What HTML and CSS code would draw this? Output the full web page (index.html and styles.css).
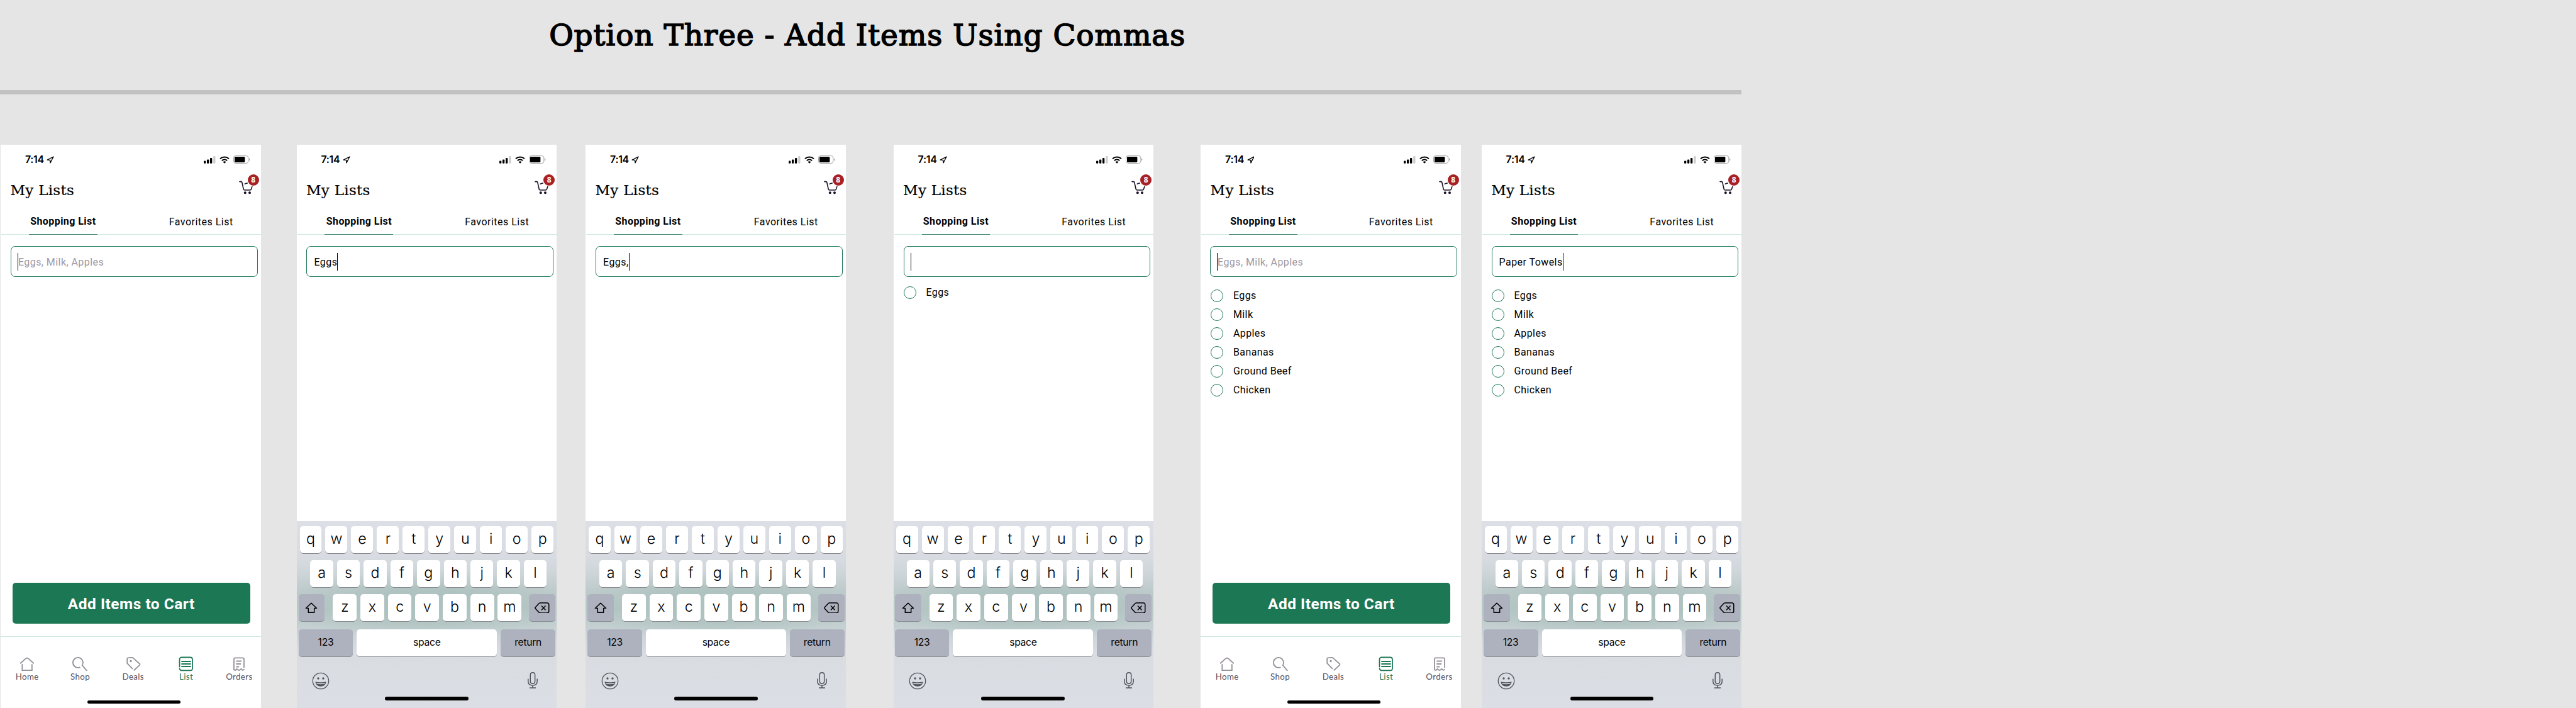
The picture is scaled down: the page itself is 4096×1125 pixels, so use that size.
FILE: index.html
```
<!DOCTYPE html>
<html lang="en">
<head>
<meta charset="utf-8">
<title>Option Three</title>
<link rel="stylesheet" href="styles.css">
</head>
<body>
<svg class="sprite" aria-hidden="true">
  <symbol id="i-loc" viewBox="0 0 12 12"><path d="M11 1 1.2 6.1l4.5.2.2 4.6z" fill="none" stroke="#000" stroke-width="1.3" stroke-linejoin="round"/></symbol>
  <symbol id="i-signal" viewBox="0 0 19 12"><rect x="0" y="7.6" width="3.3" height="4.2" rx="1"/><rect x="5" y="5.6" width="3.3" height="6.2" rx="1"/><rect x="10" y="3" width="3.3" height="8.8" rx="1"/><rect x="15.2" y="0" width="3.3" height="11.8" rx="1" fill="#ccc"/></symbol>
  <symbol id="i-wifi" viewBox="0 0 16 12"><path d="M1 4.3a10.2 10.2 0 0 1 14 0M3.8 7.2a6.2 6.2 0 0 1 8.4 0" fill="none" stroke="#000" stroke-width="2.1"/><path d="M8 11.8 5.5 9.3a3.7 3.7 0 0 1 5 0z"/></symbol>
  <symbol id="i-batt" viewBox="0 0 27 13"><rect x=".5" y=".5" width="23.4" height="12" rx="3.4" fill="none" stroke="#a5a5a5"/><rect x="2" y="2" width="16.4" height="9" rx="1.4"/><path d="M25 4.500v4c.9-.3 1.400-1.100 1.400-2s-.5-1.700-1.400-2z" fill="#a5a5a5"/></symbol>
  <symbol id="i-cart" viewBox="0 0 23 22"><g fill="none" stroke="#1d1127" stroke-width="1.6" stroke-linecap="round" stroke-linejoin="round"><path d="M1 1.600h2.500q1 0 1.300 1.200l2.400 10.700q.4 1.500 1.800 1.500h8.800q1.200 0 1.600-1.200l1.500-4.300M9.300 5.300q1.500-.8 4-1.300"/></g><circle cx="9.800" cy="19.300" r="2" fill="#1d1127"/><circle cx="17" cy="19.300" r="2" fill="#1d1127"/></symbol>
  <symbol id="i-home" viewBox="0 0 24 24"><path d="M1.800 10.800 9.700 3.600q2.300-2 4.600 0l7.900 7.200M4.300 13v9.200h15.600V13"/></symbol>
  <symbol id="i-shop" viewBox="0 0 24 24"><path d="M11.800 17.400A8 8 0 1 1 15.700 14.200L22.800 22.400"/></symbol>
  <symbol id="i-deals" viewBox="0 0 24 24"><path d="M10.400 19.300 2.200 10.800V4.200q.2-2 2.200-2l6.400-.4 11 9.700q1.200 1.300 0 2.600L13.400 21.800"/><circle cx="8" cy="7.500" r=".8"/></symbol>
  <symbol id="i-list" viewBox="0 0 24 24"><path d="M1.500 16.500V5Q1.500 1.500 5 1.500h13.500Q22 1.500 22 5v14q0 3.500-3.500 3.500H5.500q-3.300 0-4-3M5 8h14M5 12h14M5 16h14"/></symbol>
  <symbol id="i-orders" viewBox="0 0 24 24"><path d="M4 21.500V4.500q0-2.200 2.200-2.200h11.600q2.200 0 2.200 2.200v13M4 21.500l2.300.5 2.200-2 3.500 2.300 3.500-2.300 2.500 2 2-1M8 7.500h7.500M8 12h6.500M8 16.500h3.500"/></symbol>
  <symbol id="i-shift" viewBox="0 0 20 18"><path d="M10 1.200 1.400 9.600h3.900v6.700h9.400V9.600h3.900z" fill="none" stroke="#000" stroke-width="1.500" stroke-linejoin="round"/></symbol>
  <symbol id="i-del" viewBox="0 0 24 18"><path d="M8.800 1H20q2.800 0 2.800 2.800v10.400q0 2.800-2.800 2.800H8.800q-1 0-1.700-.7L1.300 9.900q-.8-.9 0-1.800L7.100 1.700Q7.800 1 8.800 1zM11 5.500l6.500 7M17.500 5.500l-6.500 7" fill="none" stroke="#000" stroke-width="1.500"/></symbol>
  <symbol id="i-emoji" viewBox="0 0 28 28"><circle cx="14" cy="14" r="12.700" fill="none" stroke="#50555c" stroke-width="1.300"/><circle cx="10" cy="10" r="1.700" fill="#50555c"/><circle cx="18" cy="10" r="1.700" fill="#50555c"/><path d="M5.300 15.200q8.700 2 17.400 0-1.300 7.500-8.700 7.500t-8.700-7.500z" fill="#50555c"/><path d="M6.800 16.900q7.200 1.600 14.400 0l-.8 1.500q-6.400 1.500-12.800 0z" fill="#dbdee4"/></symbol>
  <symbol id="i-mic" viewBox="0 0 16 26"><path d="M8 .8q3.700 0 3.700 3.700v10q0 3.700-3.700 3.700t-3.700-3.700v-10Q4.300.8 8 .8zM.8 10.500v4Q.8 21 8 21t7.200-6.500v-4M8 21v4M3 25.100h10" fill="none" stroke="#50555c" stroke-width="1.500"/></symbol>
</svg>

<main class="board">
  <header class="board-head"><h1>Option Three - Add Items Using Commas</h1></header>
  <div class="phones">

    <section class="phone">
      <div class="status"><span class="time">7:14</span><svg class="loc"><use href="#i-loc"/></svg><svg class="signal"><use href="#i-signal"/></svg><svg class="wifi"><use href="#i-wifi"/></svg><svg class="batt"><use href="#i-batt"/></svg></div>
      <div class="head"><h2>My Lists</h2><div class="cart"><svg><use href="#i-cart"/></svg><b>8</b></div></div>
      <nav class="tabs"><span class="active">Shopping List</span><span class="other">Favorites List</span></nav>
      <div class="field placeholder"><i class="caret"></i><span>Eggs, Milk, Apples</span></div>
      <div class="bottom">
        <button class="add">Add Items to Cart</button>
        <nav class="tabbar"><a><svg><use href="#i-home"/></svg>Home</a><a><svg><use href="#i-shop"/></svg>Shop</a><a><svg><use href="#i-deals"/></svg>Deals</a><a class="on"><svg><use href="#i-list"/></svg>List</a><a><svg><use href="#i-orders"/></svg>Orders</a></nav>
        <i class="home-bar"></i>
      </div>
    </section>

    <section class="phone">
      <div class="status"><span class="time">7:14</span><svg class="loc"><use href="#i-loc"/></svg><svg class="signal"><use href="#i-signal"/></svg><svg class="wifi"><use href="#i-wifi"/></svg><svg class="batt"><use href="#i-batt"/></svg></div>
      <div class="head"><h2>My Lists</h2><div class="cart"><svg><use href="#i-cart"/></svg><b>8</b></div></div>
      <nav class="tabs"><span class="active">Shopping List</span><span class="other">Favorites List</span></nav>
      <div class="field"><span>Eggs</span><i class="caret"></i></div>
      <div class="keyboard">
        <div class="row r1"><kbd>q</kbd><kbd>w</kbd><kbd>e</kbd><kbd>r</kbd><kbd>t</kbd><kbd>y</kbd><kbd>u</kbd><kbd>i</kbd><kbd>o</kbd><kbd>p</kbd></div>
        <div class="row r2"><kbd>a</kbd><kbd>s</kbd><kbd>d</kbd><kbd>f</kbd><kbd>g</kbd><kbd>h</kbd><kbd>j</kbd><kbd>k</kbd><kbd>l</kbd></div>
        <div class="row r3"><kbd class="fn"><svg class="shift"><use href="#i-shift"/></svg></kbd><div class="letters"><kbd>z</kbd><kbd>x</kbd><kbd>c</kbd><kbd>v</kbd><kbd>b</kbd><kbd>n</kbd><kbd>m</kbd></div><kbd class="fn"><svg class="del"><use href="#i-del"/></svg></kbd></div>
        <div class="row r4"><kbd class="fn">123</kbd><kbd class="space">space</kbd><kbd class="fn">return</kbd></div>
        <div class="extras"><svg class="emoji"><use href="#i-emoji"/></svg><svg class="mic"><use href="#i-mic"/></svg></div>
        <i class="home-bar"></i>
      </div>
    </section>

    <section class="phone">
      <div class="status"><span class="time">7:14</span><svg class="loc"><use href="#i-loc"/></svg><svg class="signal"><use href="#i-signal"/></svg><svg class="wifi"><use href="#i-wifi"/></svg><svg class="batt"><use href="#i-batt"/></svg></div>
      <div class="head"><h2>My Lists</h2><div class="cart"><svg><use href="#i-cart"/></svg><b>8</b></div></div>
      <nav class="tabs"><span class="active">Shopping List</span><span class="other">Favorites List</span></nav>
      <div class="field"><span>Eggs,</span><i class="caret"></i></div>
      <div class="keyboard">
        <div class="row r1"><kbd>q</kbd><kbd>w</kbd><kbd>e</kbd><kbd>r</kbd><kbd>t</kbd><kbd>y</kbd><kbd>u</kbd><kbd>i</kbd><kbd>o</kbd><kbd>p</kbd></div>
        <div class="row r2"><kbd>a</kbd><kbd>s</kbd><kbd>d</kbd><kbd>f</kbd><kbd>g</kbd><kbd>h</kbd><kbd>j</kbd><kbd>k</kbd><kbd>l</kbd></div>
        <div class="row r3"><kbd class="fn"><svg class="shift"><use href="#i-shift"/></svg></kbd><div class="letters"><kbd>z</kbd><kbd>x</kbd><kbd>c</kbd><kbd>v</kbd><kbd>b</kbd><kbd>n</kbd><kbd>m</kbd></div><kbd class="fn"><svg class="del"><use href="#i-del"/></svg></kbd></div>
        <div class="row r4"><kbd class="fn">123</kbd><kbd class="space">space</kbd><kbd class="fn">return</kbd></div>
        <div class="extras"><svg class="emoji"><use href="#i-emoji"/></svg><svg class="mic"><use href="#i-mic"/></svg></div>
        <i class="home-bar"></i>
      </div>
    </section>

    <section class="phone">
      <div class="status"><span class="time">7:14</span><svg class="loc"><use href="#i-loc"/></svg><svg class="signal"><use href="#i-signal"/></svg><svg class="wifi"><use href="#i-wifi"/></svg><svg class="batt"><use href="#i-batt"/></svg></div>
      <div class="head"><h2>My Lists</h2><div class="cart"><svg><use href="#i-cart"/></svg><b>8</b></div></div>
      <nav class="tabs"><span class="active">Shopping List</span><span class="other">Favorites List</span></nav>
      <div class="field placeholder"><i class="caret"></i></div>
      <ul class="items near"><li>Eggs</li></ul>
      <div class="keyboard left">
        <div class="row r1"><kbd>q</kbd><kbd>w</kbd><kbd>e</kbd><kbd>r</kbd><kbd>t</kbd><kbd>y</kbd><kbd>u</kbd><kbd>i</kbd><kbd>o</kbd><kbd>p</kbd></div>
        <div class="row r2"><kbd>a</kbd><kbd>s</kbd><kbd>d</kbd><kbd>f</kbd><kbd>g</kbd><kbd>h</kbd><kbd>j</kbd><kbd>k</kbd><kbd>l</kbd></div>
        <div class="row r3"><kbd class="fn"><svg class="shift"><use href="#i-shift"/></svg></kbd><div class="letters"><kbd>z</kbd><kbd>x</kbd><kbd>c</kbd><kbd>v</kbd><kbd>b</kbd><kbd>n</kbd><kbd>m</kbd></div><kbd class="fn"><svg class="del"><use href="#i-del"/></svg></kbd></div>
        <div class="row r4"><kbd class="fn">123</kbd><kbd class="space">space</kbd><kbd class="fn">return</kbd></div>
        <div class="extras"><svg class="emoji"><use href="#i-emoji"/></svg><svg class="mic"><use href="#i-mic"/></svg></div>
        <i class="home-bar"></i>
      </div>
    </section>

    <section class="phone">
      <div class="status"><span class="time">7:14</span><svg class="loc"><use href="#i-loc"/></svg><svg class="signal"><use href="#i-signal"/></svg><svg class="wifi"><use href="#i-wifi"/></svg><svg class="batt"><use href="#i-batt"/></svg></div>
      <div class="head"><h2>My Lists</h2><div class="cart"><svg><use href="#i-cart"/></svg><b>8</b></div></div>
      <nav class="tabs"><span class="active">Shopping List</span><span class="other">Favorites List</span></nav>
      <div class="field placeholder shifted"><i class="caret"></i><span>Eggs, Milk, Apples</span></div>
      <ul class="items"><li>Eggs</li><li>Milk</li><li>Apples</li><li>Bananas</li><li>Ground Beef</li><li>Chicken</li></ul>
      <div class="bottom">
        <button class="add">Add Items to Cart</button>
        <nav class="tabbar"><a><svg><use href="#i-home"/></svg>Home</a><a><svg><use href="#i-shop"/></svg>Shop</a><a><svg><use href="#i-deals"/></svg>Deals</a><a class="on"><svg><use href="#i-list"/></svg>List</a><a><svg><use href="#i-orders"/></svg>Orders</a></nav>
        <i class="home-bar"></i>
      </div>
    </section>

    <section class="phone">
      <div class="status"><span class="time">7:14</span><svg class="loc"><use href="#i-loc"/></svg><svg class="signal"><use href="#i-signal"/></svg><svg class="wifi"><use href="#i-wifi"/></svg><svg class="batt"><use href="#i-batt"/></svg></div>
      <div class="head"><h2>My Lists</h2><div class="cart"><svg><use href="#i-cart"/></svg><b>8</b></div></div>
      <nav class="tabs"><span class="active">Shopping List</span><span class="other">Favorites List</span></nav>
      <div class="field"><span>Paper Towels</span><i class="caret"></i></div>
      <ul class="items"><li>Eggs</li><li>Milk</li><li>Apples</li><li>Bananas</li><li>Ground Beef</li><li>Chicken</li></ul>
      <div class="keyboard">
        <div class="row r1"><kbd>q</kbd><kbd>w</kbd><kbd>e</kbd><kbd>r</kbd><kbd>t</kbd><kbd>y</kbd><kbd>u</kbd><kbd>i</kbd><kbd>o</kbd><kbd>p</kbd></div>
        <div class="row r2"><kbd>a</kbd><kbd>s</kbd><kbd>d</kbd><kbd>f</kbd><kbd>g</kbd><kbd>h</kbd><kbd>j</kbd><kbd>k</kbd><kbd>l</kbd></div>
        <div class="row r3"><kbd class="fn"><svg class="shift"><use href="#i-shift"/></svg></kbd><div class="letters"><kbd>z</kbd><kbd>x</kbd><kbd>c</kbd><kbd>v</kbd><kbd>b</kbd><kbd>n</kbd><kbd>m</kbd></div><kbd class="fn"><svg class="del"><use href="#i-del"/></svg></kbd></div>
        <div class="row r4"><kbd class="fn">123</kbd><kbd class="space">space</kbd><kbd class="fn">return</kbd></div>
        <div class="extras"><svg class="emoji"><use href="#i-emoji"/></svg><svg class="mic"><use href="#i-mic"/></svg></div>
        <i class="home-bar"></i>
      </div>
    </section>

  </div>
</main>
</body>
</html>
```
FILE: styles.css
```
* { box-sizing: border-box; margin: 0; padding: 0; }
html, body { background: #e5e5e5; overflow: hidden; }
.sprite { display: none; }
.board { width: 4100px; height: 1126px; zoom: 0.99902; font-family: Roboto, sans-serif; color: #000; }
.board-head { width: 2772px; height: 150px; border-bottom: 8px solid #c2c2c2; padding: 24px 0 0 874px; }
.board-head h1 { font: 400 47px/64px "DejaVu Serif", serif; letter-spacing: 0.93px; -webkit-text-stroke: 1.6px #000; white-space: nowrap; }

.phones { display: grid; grid-template-columns: 471px 460px 490px 489px 447px 414px; padding: 80px 0 0 1px; }
.phone { width: 414px; height: 896px; background: #fff; display: flex; flex-direction: column; overflow: hidden; }
.phone svg { display: block; flex: none; }

.status { height: 48px; display: flex; align-items: center; padding: 0 17px 0 39px; }
.time { font: 600 16px/20px Inter, sans-serif; width: 34.5px; letter-spacing: -0.3px; white-space: nowrap; }
.loc { width: 12px; height: 12px; }
.signal { width: 19px; height: 12px; margin-left: auto; }
.wifi { width: 16px; height: 12px; margin-left: 6px; }
.batt { width: 27px; height: 13px; margin-left: 6px; }

.head { height: 61px; display: flex; justify-content: space-between; padding: 6px 3px 0 15.5px; }
.head h2 { font: 400 23px/38px "DejaVu Serif", serif; letter-spacing: 0.3px; -webkit-text-stroke: 0.2px #000; white-space: nowrap; }
.cart { width: 32px; height: 32px; position: relative; padding-top: 3px; }
.cart svg { width: 23px; height: 22px; }
.cart b { position: absolute; right: 0; top: -7px; width: 18px; height: 18px; border-radius: 50%; background: #a92024; color: #fff; font: 700 12px/18px "Open Sans", sans-serif; text-align: center; }

.tabs { height: 34px; margin-left: 1px; border-bottom: 2px solid #d0e7df; display: flex; flex: none; }
.tabs span { font-size: 16px; line-height: 27px; white-space: nowrap; }
.tabs .active { height: 34px; width: 109px; margin-left: 44px; font-weight: 700; text-align: center; border-bottom: 2px solid #3c876a; letter-spacing: 0.45px; }
.tabs .other { margin-left: 114px; padding-top: 1px; letter-spacing: 0.5px; }

.field { flex: none; width: 393px; height: 50px; margin: 18px 0 0 16px; border: 1px solid #1c7755; border-radius: 7px; display: flex; align-items: center; padding-left: 11px; font-size: 16px; letter-spacing: 0.45px; }
.field span { white-space: nowrap; padding-top: 1px; }
.caret { width: 1px; height: 28px; background: #000; }
.placeholder { color: #9d98a3; padding-left: 10px; }
.shifted { margin-left: 15px; }

.items { list-style: none; margin: 15px 0 0 16px; }
.items.near { margin-top: 10px; }
.items li { height: 30px; display: flex; align-items: center; font-size: 16px; letter-spacing: 0.4px; line-height: 30px; white-space: nowrap; gap: 16px; }
.items li::before { content: ""; width: 18px; height: 18px; border: 1px solid #1c7755; border-radius: 50%; }

.bottom { margin-top: auto; height: 199px; flex: none; display: flex; flex-direction: column; }
.add { width: 378px; height: 65px; margin-left: 19px; padding-top: 3px; border: 0; border-radius: 5px; background: #1c7755; color: #fff; font: 700 24.5px/62px Roboto, sans-serif; letter-spacing: 0.5px; }
.tabbar { margin-top: 20px; border-top: 1px solid #cce6de; height: 80px; display: flex; padding-top: 31px; }
.tabbar a { flex: none; display: flex; flex-direction: column; align-items: center; font: 400 13.3px/18px Lato, sans-serif; letter-spacing: 0.4px; color: #57505f; width: 84.4px; }
.tabbar svg { width: 24px; height: 24px; fill: none; stroke: #97919b; stroke-width: 1.8; stroke-linecap: round; }
.tabbar .on { color: #1c7755; line-height: 17px; }
.tabbar .on svg { stroke: #1c7755; }
.bottom .home-bar { width: 148px; height: 5px; border-radius: 3px; background: #000; margin: 22px 0 0 138px; }

.keyboard { margin-top: auto; height: 297px; flex: none; padding-top: 8px; display: flex; flex-direction: column; background: radial-gradient(ellipse 230px 55px at 50% 134px, rgba(168,191,187,.7) 40%, rgba(168,191,187,0) 100%), linear-gradient(#dce0e6 0, #d8dce2 55px, #cfd6da 80px, #bfcbcc 108px, #b9c9c8 140px, #c3cfd0 166px, #d0d7db 190px, #d9dde2 213px, #dbdee4 100%); }
.row { display: flex; gap: 6px; height: 43px; }
.row kbd { flex: 1; height: 43px; border-radius: 5px; background: #fff; box-shadow: 0 1px 0 #898c91; font: 300 23.3px/41px Inter, sans-serif; display: flex; justify-content: center; }
.r1 { padding: 0 5px; }
.left .r1 { padding: 0 6px 0 4px; }
.r2 { padding: 0 16px 0 22px; margin-top: 11px; }
.left .r2 { padding: 0 17px 0 21px; }
.r3 { padding: 0 2px 0 3px; margin-top: 11px; justify-content: space-between; }
.letters { width: 300px; display: flex; gap: 6px; margin-left: 1px; }
.row kbd.fn { flex: none; width: 42px; background: #aeb2be; align-items: center; }
.r4 { padding: 0 2px 0 3px; margin-top: 13px; }
.left .r3, .left .r4 { padding: 0 3px 0 2px; }
.r4 kbd, .row.r4 kbd.fn, .row kbd.space { font: 400 15.7px/43px Inter, sans-serif; letter-spacing: -0.3px; }
.row.r4 kbd.fn { width: 87px; }
.shift { width: 20px; height: 18px; }
.del { width: 24px; height: 18px; }
.extras { display: flex; justify-content: space-between; padding: 25px 30px 0 25px; height: 64px; }
.left .extras { padding: 25px 31px 0 24px; }
.emoji { width: 28px; height: 28px; }
.mic { width: 16px; height: 26px; }
.keyboard .home-bar { width: 133px; height: 6px; border-radius: 3px; background: #000; margin-left: 141px; }
.keyboard.left .home-bar { margin-left: 140px; }
```
